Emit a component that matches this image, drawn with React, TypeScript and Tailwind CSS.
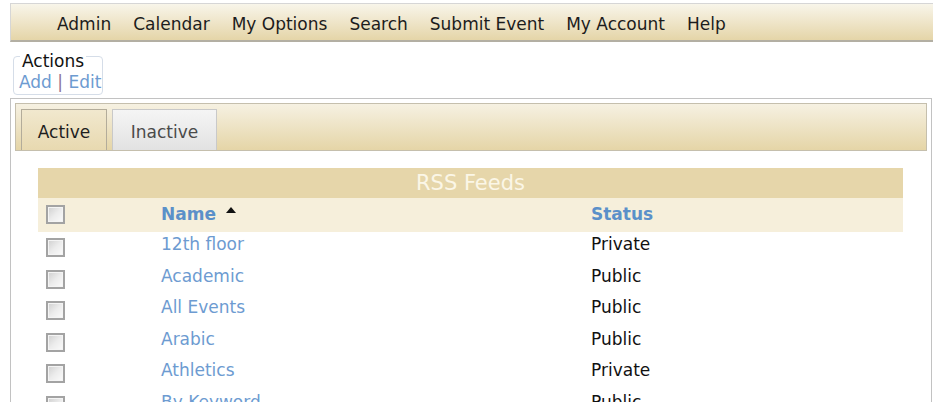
import React from "react";

const font = { fontFamily: '"DejaVu Sans", Verdana, sans-serif' };

function Checkbox() {
  return (
    <div className="w-[19px] h-[19px] border-2 border-[#a3a3a3] bg-gradient-to-br from-[#cfcfcf] via-[#ececec] to-[#fbfbfb] shadow-[inset_0_0_0_1px_#f4f4f4]" />
  );
}

const rows: [string, string][] = [
  ["12th floor", "Private"],
  ["Academic", "Public"],
  ["All Events", "Public"],
  ["Arabic", "Public"],
  ["Athletics", "Private"],
  ["By Keyword", "Public"],
];

const nav = ["Admin", "Calendar", "My Options", "Search", "Submit Event", "My Account", "Help"];

export default function App() {
  return (
    <div className="w-[933px] h-[402px] overflow-hidden bg-white text-[17px] leading-[17px]" style={font}>
      {/* Top nav */}
      <div className="mt-[3px] ml-[10px] h-[39px] border-t border-l border-[#d6d6d6] border-b-2 border-b-[#b3afa3] bg-gradient-to-b from-[#f8f5ea] to-[#e5d5a8] flex items-center pl-[46px] gap-[22px] text-[#1c1c1c]">
        {nav.map((n) => (
          <span key={n} className="pt-[4px]">{n}</span>
        ))}
      </div>

      {/* Actions box */}
      <div className="ml-[13px] mt-[14px] w-[90px] h-[39px] border border-[#d5dde8] rounded-[4px]">
        <div className="-mt-[4px] ml-[6px] inline-block bg-white px-[2px] text-[#111] align-top">Actions</div>
        <div className="pl-[5px] whitespace-nowrap">
          <span className="text-[#6d9bd1]">Add</span>
          <span className="text-[#8d7396]"> | </span>
          <span className="text-[#6d9bd1]">Edit</span>
        </div>
      </div>

      {/* Main panel */}
      <div className="mt-[3px] ml-[10px] mr-[1px] h-[320px] border border-[#c2c2c2] p-[4px]">
        <div className="h-[48px] border border-[#c5bfad] bg-gradient-to-b from-[#f6f1e2] to-[#e5d5a7] flex items-end pl-[5px] gap-[5px]">
          <div className="h-[41px] w-[86px] border border-b-0 border-[#b3ac9a] bg-gradient-to-b from-[#f1e8ce] to-[#e8d9b0] flex items-center justify-center pt-[4px] text-[#1e1e1e]">
            Active
          </div>
          <div className="h-[41px] w-[105px] border border-b-0 border-[#c9c9c9] bg-gradient-to-b from-[#f5f5f5] to-[#e2e2e2] flex items-center justify-center pt-[4px] text-[#4a4a4a]">
            Inactive
          </div>
        </div>

        <div className="ml-[23px] mt-[17px] w-[865px]">
          <div className="h-[30px] bg-[#e6d6aa] flex items-center justify-center text-[21px] leading-[21px] text-[#fbf6e7]">
            RSS Feeds
          </div>
          <div className="h-[34px] bg-[#f6efdb] grid grid-cols-[123px_430px_1fr]">
            <div className="pl-[8px] pt-[7px]">
              <Checkbox />
            </div>
            <div className="pt-[8px] flex items-start">
              <span className="font-bold text-[#5b90c9]">Name</span>
              <svg width="10" height="6" viewBox="0 0 10 6" className="ml-[10px] mt-[1px]">
                <polygon points="5,0 10,6 0,6" fill="#111" />
              </svg>
            </div>
            <div className="pt-[8px] font-bold text-[#5b90c9]">Status</div>
          </div>
          {rows.map(([name, status]) => (
            <div key={name} className="h-[31.5px] grid grid-cols-[123px_430px_1fr]">
              <div className="pl-[8px] pt-[6px]">
                <Checkbox />
              </div>
              <div className="pt-[4px] text-[#6d9bd1]">{name}</div>
              <div className="pt-[4px] text-[#111]">{status}</div>
            </div>
          ))}
        </div>
      </div>
    </div>
  );
}
